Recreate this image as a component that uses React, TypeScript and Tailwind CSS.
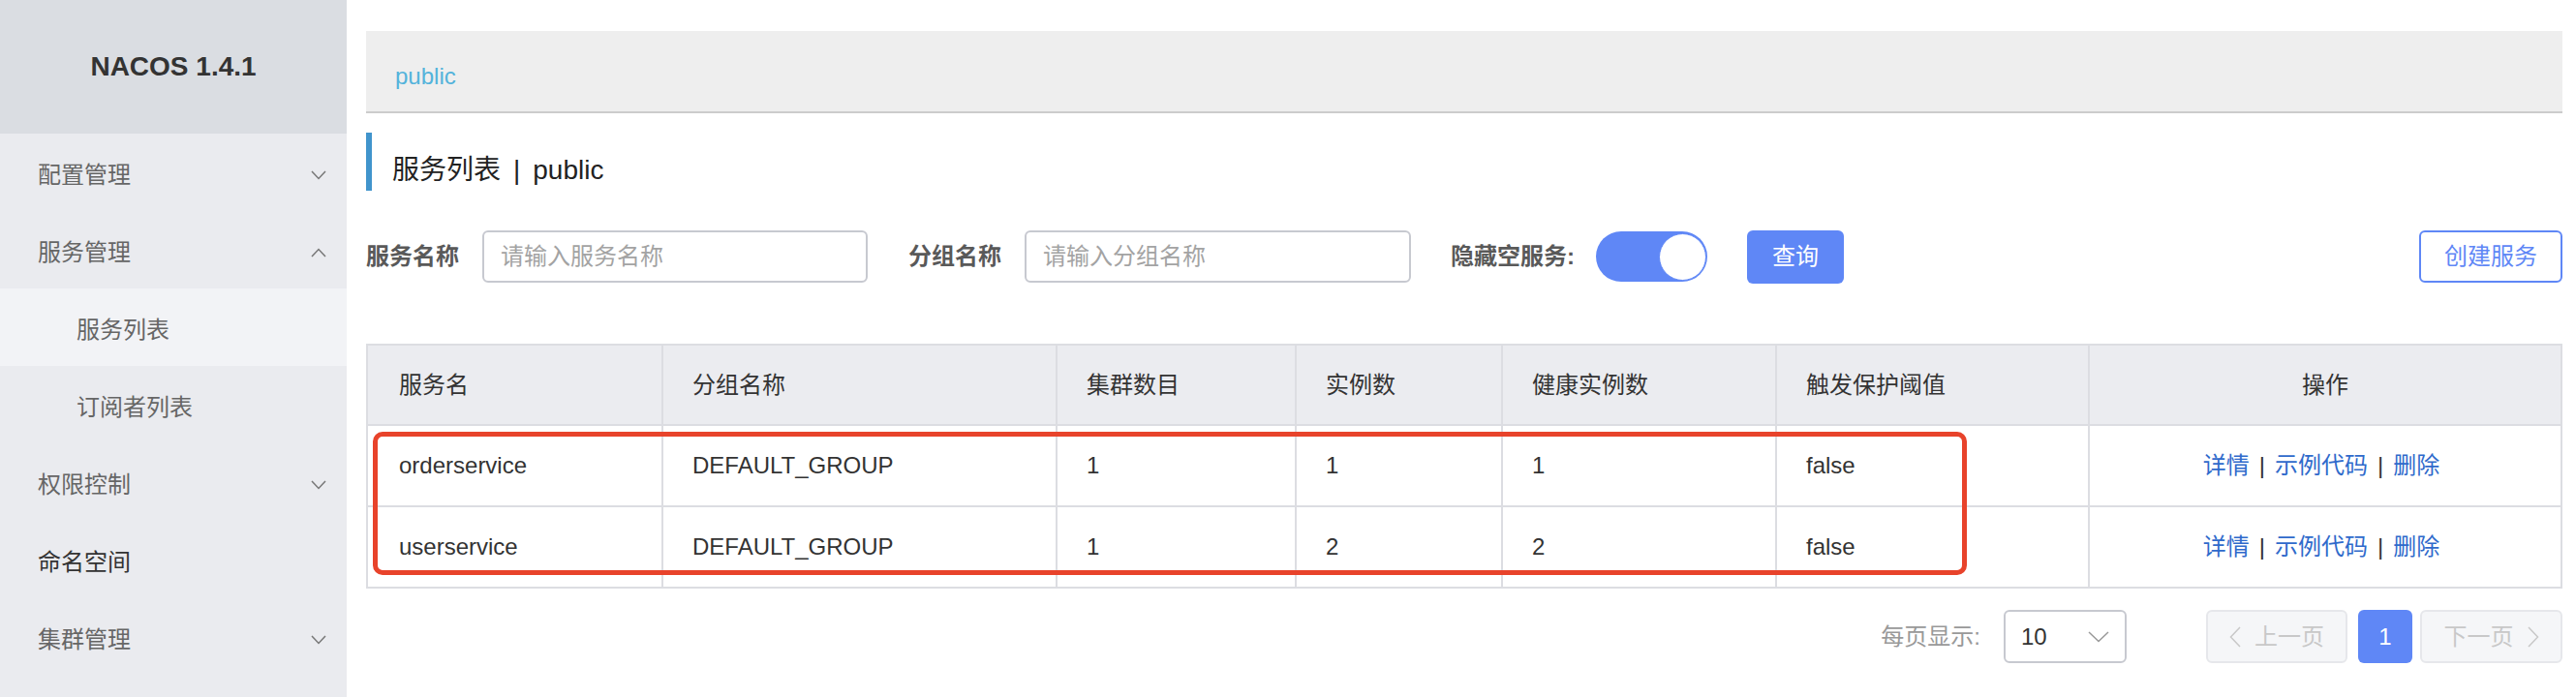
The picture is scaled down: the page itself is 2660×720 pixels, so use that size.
import React from "react";

const Chevron = ({ up = false, w = 16, h = 10, color = "#777" }: { up?: boolean; w?: number; h?: number; color?: string }) => (
  <svg width={w} height={h} viewBox={`0 0 ${w} ${h}`}>
    <path
      d={up ? `M1 ${h - 1} L${w / 2} 1.5 L${w - 1} ${h - 1}` : `M1 1 L${w / 2} ${h - 1.5} L${w - 1} 1`}
      fill="none"
      stroke={color}
      strokeWidth="1.5"
    />
  </svg>
);

const SideChevronL = ({ color = "#c8c8c8" }: { color?: string }) => (
  <svg width="12" height="22" viewBox="0 0 12 22">
    <path d="M11 1 L1.5 11 L11 21" fill="none" stroke={color} strokeWidth="1.5" />
  </svg>
);
const SideChevronR = ({ color = "#c8c8c8" }: { color?: string }) => (
  <svg width="12" height="22" viewBox="0 0 12 22">
    <path d="M1 1 L10.5 11 L1 21" fill="none" stroke={color} strokeWidth="1.5" />
  </svg>
);

const font = "font-['Liberation_Sans','Noto_Sans_CJK_SC',sans-serif]";

const rows = [
  { name: "orderservice", group: "DEFAULT_GROUP", clusters: "1", inst: "1", healthy: "1", protect: "false" },
  { name: "userservice", group: "DEFAULT_GROUP", clusters: "1", inst: "2", healthy: "2", protect: "false" },
];

export default function App() {
  return (
    <div className={`flex w-[2660px] h-[720px] overflow-hidden bg-white ${font}`}>
      {/* Sidebar */}
      <aside className="w-[358px] shrink-0 h-full bg-[#eaebef] flex flex-col">
        <div className="h-[138px] bg-[#dadde2] flex items-center justify-center text-[28px] font-bold text-[#333]">
          NACOS 1.4.1
        </div>
        <div className="h-[80px] flex items-center justify-between pt-[6px] pl-[39px] pr-[21px] text-[24px] text-[#666]">
          <span>配置管理</span>
          <Chevron />
        </div>
        <div className="h-[80px] flex items-center justify-between pt-[6px] pl-[39px] pr-[21px] text-[24px] text-[#666]">
          <span>服务管理</span>
          <Chevron up />
        </div>
        <div className="h-[80px] flex items-center pt-[6px] pl-[79px] text-[24px] text-[#666] bg-[#f2f3f6]">
          <span>服务列表</span>
        </div>
        <div className="h-[80px] flex items-center pt-[6px] pl-[79px] text-[24px] text-[#666]">
          <span>订阅者列表</span>
        </div>
        <div className="h-[80px] flex items-center justify-between pt-[6px] pl-[39px] pr-[21px] text-[24px] text-[#666]">
          <span>权限控制</span>
          <Chevron />
        </div>
        <div className="h-[80px] flex items-center pt-[6px] pl-[39px] text-[24px] text-[#333]">
          <span>命名空间</span>
        </div>
        <div className="h-[80px] flex items-center justify-between pt-[6px] pl-[39px] pr-[21px] text-[24px] text-[#666]">
          <span>集群管理</span>
          <Chevron />
        </div>
      </aside>

      {/* Main */}
      <main className="flex-1 pl-[20px] pr-[14px] pt-[32px]">
        {/* Breadcrumb */}
        <div className="h-[85px] bg-[#eeeeee] border-b-2 border-[#cccccc] pl-[30px] pt-[33px] text-[24px] leading-[28px] text-[#53b3db]">
          public
        </div>

        {/* Title */}
        <div className="mt-[20px] h-[60px] border-l-[6px] border-[#4194cc] pl-[21px] pt-[17px] flex items-center text-[28px] text-[#222]">
          <span>服务列表</span>
          <span className="mx-[13px]">|</span>
          <span>public</span>
        </div>

        {/* Filter row */}
        <div className="mt-[41px] h-[54px] flex items-center">
          <span className="text-[24px] font-bold text-[#595959]">服务名称</span>
          <div className="ml-[24px] w-[398px] h-[54px] border-2 border-[#c7c9d0] rounded-[6px] flex items-center pl-[17px] text-[24px] text-[#a3a3a3]">
            请输入服务名称
          </div>
          <span className="ml-[42px] text-[24px] font-bold text-[#595959]">分组名称</span>
          <div className="ml-[24px] w-[399px] h-[54px] border-2 border-[#c7c9d0] rounded-[6px] flex items-center pl-[17px] text-[24px] text-[#a3a3a3]">
            请输入分组名称
          </div>
          <span className="ml-[41px] text-[24px] font-bold text-[#595959]">隐藏空服务:</span>
          <div className="ml-[22px] w-[115px] h-[52px] rounded-full bg-[#5f87f6] flex items-center justify-end pr-[1px]">
            <div className="w-[49px] h-[49px] rounded-full bg-white border border-[#5f87f6]" />
          </div>
          <div className="ml-[41px] w-[100px] h-[55px] rounded-[6px] bg-[#5f87f6] flex items-center justify-center text-[24px] text-white">
            查询
          </div>
          <div className="ml-auto w-[148px] h-[54px] rounded-[6px] border-2 border-[#5f87f6] flex items-center justify-center text-[24px] text-[#5f87f6]">
            创建服务
          </div>
        </div>

        {/* Table */}
        <div className="relative mt-[63px]">
          <div className="border-2 border-[#dcdde2] text-[24px] text-[#333]">
            <div className="grid grid-cols-[305px_407px_247px_213px_283px_323px_1fr] h-[83px] bg-[#ebecf0] border-b-2 border-[#dcdde2]">
              <div className="flex items-center pl-[32px] border-r-2 border-[#dcdde2]">服务名</div>
              <div className="flex items-center pl-[30px] border-r-2 border-[#dcdde2]">分组名称</div>
              <div className="flex items-center pl-[30px] border-r-2 border-[#dcdde2]">集群数目</div>
              <div className="flex items-center pl-[30px] border-r-2 border-[#dcdde2]">实例数</div>
              <div className="flex items-center pl-[30px] border-r-2 border-[#dcdde2]">健康实例数</div>
              <div className="flex items-center pl-[30px] border-r-2 border-[#dcdde2]">触发保护阈值</div>
              <div className="flex items-center justify-center">操作</div>
            </div>
            {rows.map((r, i) => (
              <div
                key={r.name}
                className={`grid grid-cols-[305px_407px_247px_213px_283px_323px_1fr] ${i === 0 ? "h-[84px] border-b-2 border-[#dcdde2]" : "h-[82px]"}`}
              >
                <div className="flex items-center pl-[32px] border-r-2 border-[#dcdde2]">{r.name}</div>
                <div className="flex items-center pl-[30px] border-r-2 border-[#dcdde2]">{r.group}</div>
                <div className="flex items-center pl-[30px] border-r-2 border-[#dcdde2]">{r.clusters}</div>
                <div className="flex items-center pl-[30px] border-r-2 border-[#dcdde2]">{r.inst}</div>
                <div className="flex items-center pl-[30px] border-r-2 border-[#dcdde2]">{r.healthy}</div>
                <div className="flex items-center pl-[30px] border-r-2 border-[#dcdde2]">{r.protect}</div>
                <div className="flex items-center justify-center pr-[8px]">
                  <span className="text-[#2f6acb]">详情</span>
                  <span className="mx-[10px] text-[#333]">|</span>
                  <span className="text-[#2f6acb]">示例代码</span>
                  <span className="mx-[10px] text-[#333]">|</span>
                  <span className="text-[#2f6acb]">删除</span>
                </div>
              </div>
            ))}
          </div>
          {/* red annotation box */}
          <div className="absolute left-[7px] top-[91px] w-[1646px] h-[148px] border-[5px] border-[#e8432b] rounded-[10px] pointer-events-none" />
        </div>

        {/* Pagination */}
        <div className="mt-[22px] h-[55px] flex items-center justify-end">
          <span className="text-[24px] text-[#999]">每页显示:</span>
          <div className="ml-[24px] w-[127px] h-[55px] border-2 border-[#c7c9d0] rounded-[6px] flex items-center justify-between pl-[16px] pr-[16px] text-[24px] text-[#333]">
            <span>10</span>
            <Chevron w={22} h={12} color="#999" />
          </div>
          <div className="ml-[82px] w-[146px] h-[55px] border-2 border-[#e6e7eb] bg-[#f5f6f8] rounded-[6px] flex items-center justify-center gap-[14px] text-[24px] text-[#c8c8c8]">
            <SideChevronL />
            <span>上一页</span>
          </div>
          <div className="ml-[11px] w-[56px] h-[55px] bg-[#5f87f6] rounded-[6px] flex items-center justify-center text-[24px] text-white">
            1
          </div>
          <div className="ml-[8px] w-[147px] h-[55px] border-2 border-[#e6e7eb] bg-[#f5f6f8] rounded-[6px] flex items-center justify-center gap-[14px] text-[24px] text-[#c8c8c8]">
            <span>下一页</span>
            <SideChevronR />
          </div>
        </div>
      </main>
    </div>
  );
}
